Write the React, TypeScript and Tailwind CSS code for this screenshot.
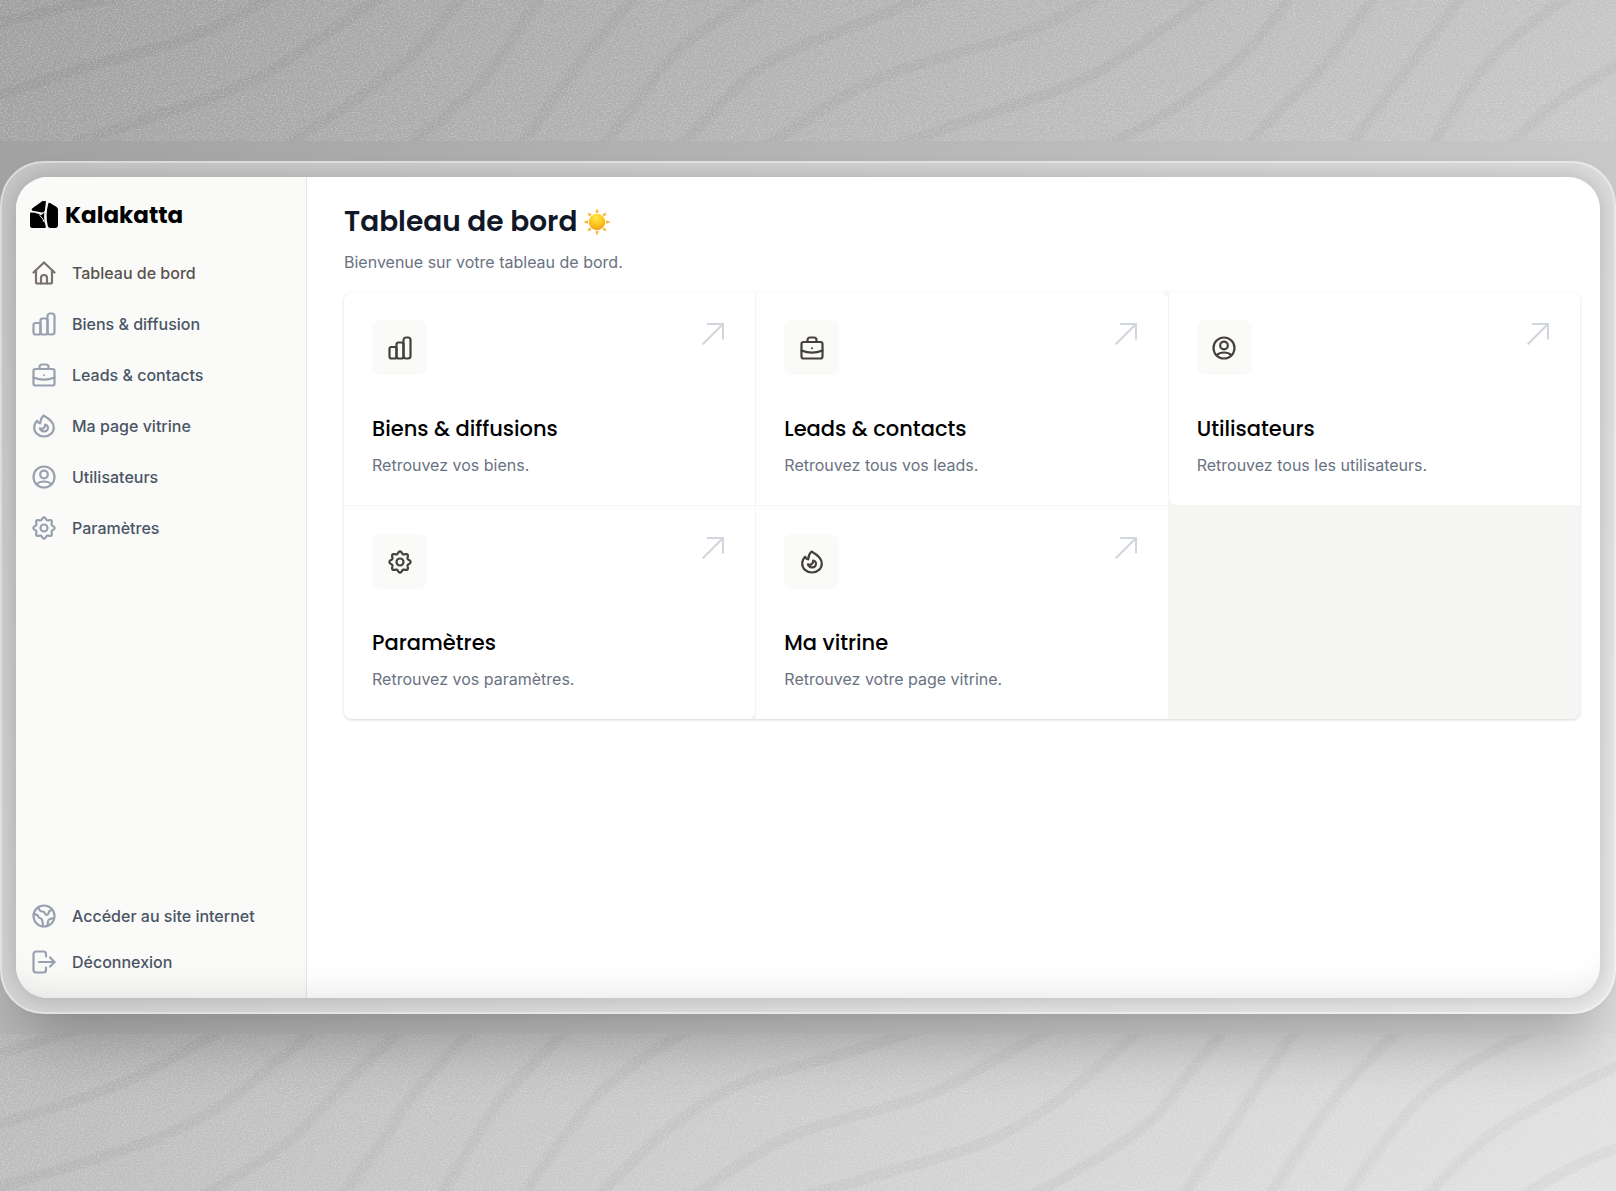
import React from "react";

type Point = [number, number];

const TOP_WAVES: Point[][] = [
  [[-20, 85], [60, 20], [130, -20]],
  [[-20, 310], [60, 220], [160, 140], [220, 70], [270, -20]],
  [[75, 430], [150, 350], [240, 260], [290, 160], [375, -20]],
  [[275, 440], [330, 340], [370, 240], [410, 150], [450, -20]],
  [[400, 430], [450, 310], [490, 160], [525, -20]],
  [[505, 440], [540, 290], [570, 150], [620, -20]],
  [[585, 440], [620, 300], [650, 170], [690, 70], [740, -20]],
  [[660, 440], [700, 310], [740, 190], [800, 110], [910, -20]],
  [[745, 440], [810, 300], [870, 210], [940, 150], [1010, 90], [1070, -20]],
  [[870, 440], [960, 340], [1050, 250], [1110, 130], [1178, -20]],
  [[1075, 440], [1130, 350], [1180, 240], [1220, 130], [1255, -20]],
  [[1210, 440], [1245, 320], [1290, 190], [1335, -20]],
  [[1310, 440], [1350, 270], [1385, 130], [1420, -20]],
  [[1390, 440], [1420, 270], [1470, 100], [1525, -20]],
  [[1465, 440], [1510, 280], [1600, 150]],
];

const BOTTOM_WAVES: Point[][] = [
  [[-20, 80], [30, 30], [80, -20]],
  [[-20, 290], [90, 190], [160, 90], [220, -20]],
  [[-20, 480], [80, 390], [160, 310], [220, 210], [270, 80], [308, -20]],
  [[195, 490], [270, 360], [310, 230], [350, 100], [392, -20]],
  [[330, 490], [370, 340], [400, 170], [460, -20]],
  [[427, 490], [460, 320], [490, 170], [552, -20]],
  [[507, 490], [550, 290], [600, 110], [672, -20]],
  [[580, 490], [630, 330], [680, 210], [730, 130], [800, 80], [900, -20]],
  [[672, 490], [740, 340], [800, 270], [900, 190], [960, 90], [1022, -20]],
  [[780, 490], [880, 400], [960, 330], [1020, 220], [1070, 90], [1108, -20]],
  [[1000, 490], [1070, 370], [1120, 260], [1150, 130], [1190, -20]],
  [[1146, 490], [1190, 310], [1220, 150], [1260, -20]],
  [[1232, 490], [1270, 300], [1310, 130], [1360, -20]],
  [[1306, 490], [1345, 310], [1385, 170], [1430, 80], [1492, -20]],
  [[1385, 490], [1430, 330], [1500, 200], [1600, 50]],
  [[1477, 490], [1530, 380], [1600, 310]],
];

// Smooth line through the midpoints of the given points
const toPath = (points: Point[]) => {
  let d = `M${points[0][0]} ${points[0][1]}`;
  for (let i = 1; i < points.length - 1; i++) {
    const [x, y] = points[i];
    const [nx, ny] = points[i + 1];
    const last = i === points.length - 2;
    d += ` Q${x} ${y} ${last ? nx : (x + nx) / 2} ${last ? ny : (y + ny) / 2}`;
  }
  return d;
};

const Texture = ({ id, waves, height }: { id: string; waves: Point[][]; height: number }) => (
  <svg
    className="block h-full w-full"
    viewBox={`0 0 1568 ${height}`}
    preserveAspectRatio="none"
    aria-hidden="true"
  >
    <filter id={`${id}-soft`}>
      <feGaussianBlur stdDeviation="2" />
    </filter>
    <filter id={id} x="0" y="0" width="100%" height="100%">
      <feTurbulence type="fractalNoise" baseFrequency="0.6 0.25" numOctaves="3" stitchTiles="stitch" />
      <feColorMatrix values="0 0 0 0 1  0 0 0 0 1  0 0 0 0 1  1.6 0 0 0 -0.65" />
    </filter>
    <g fill="none" stroke="#000" strokeOpacity="0.035" strokeWidth="11" filter={`url(#${id}-soft)`}>
      {waves.map((wave, i) => (
        <path key={i} d={toPath(wave)} vectorEffect="non-scaling-stroke" />
      ))}
    </g>
    <rect width="1568" height={height} filter={`url(#${id})`} opacity="0.42" />
  </svg>
);

const COG_PATH =
  Array.from({ length: 96 }, (_, i) => {
    const angle = (i / 96) * Math.PI * 2;
    const radius = 9.4 + 1.2 * Math.cos(angle * 8);
    const x = 12 + radius * Math.cos(angle);
    const y = 12 + radius * Math.sin(angle);
    return `${i === 0 ? "M" : "L"}${x.toFixed(2)} ${y.toFixed(2)}`;
  }).join(" ") + "Z";

const ICONS = {
  home: (
    <>
      <path d="M1.5 11.5 12 1.5l10.5 10" />
      <path d="M4 9.5V21a1.5 1.5 0 0 0 1.5 1.5h13A1.5 1.5 0 0 0 20 21V9.5" />
      <path d="M9 22.5V17a3 3 0 0 1 6 0v5.5" />
    </>
  ),
  bars: (
    <>
      <rect x="1.5" y="11" width="7" height="11.5" rx="2" />
      <rect x="8.5" y="6.5" width="7" height="16" rx="2" />
      <rect x="15.5" y="1.5" width="7" height="21" rx="2.5" />
    </>
  ),
  briefcase: (
    <>
      <rect x="1.5" y="6" width="21" height="16.5" rx="2" />
      <path d="M7.5 6V4A2.5 2.5 0 0 1 10 1.5h4A2.5 2.5 0 0 1 16.500 4v2" />
      <path d="M1.5 14.5C8 17.2 16 17.2 22.5 14.5" />
      <circle cx="12" cy="12.3" r="1" fill="currentColor" stroke="none" />
    </>
  ),
  flame: (
    <>
      <path d="M11.5 1.5C16 4 21.8 8 21.8 13.5c0 5-4.3 9-9.8 9s-9.800-4-9.800-9c0-3 1.100-5 2.900-6.800.7 1.700 1.700 2.600 3.100 2.600C8.400 6.500 9.300 3.500 11.500 1.500Z" />
      <path d="M13.2 10.5c2.8.8 3.5 3.3 2.2 5.3-1.8 2.7-6.6 2-7.5-1.5 2.4 1.3 5.6-.3 5.3-3.8Z" />
    </>
  ),
  user: (
    <>
      <circle cx="12" cy="12" r="10.5" />
      <circle cx="12" cy="9.5" r="3.8" />
      <path d="M4.5 19.2c4-3.600 11-3.600 15 0" />
    </>
  ),
  cog: (
    <>
      <path d={COG_PATH} />
      <circle cx="12" cy="12" r="3.5" />
    </>
  ),
  globe: (
    <>
      <circle cx="12" cy="12" r="10.5" />
      <path d="M6.2 3.2C7 6 8.2 7.5 10.5 7.5c2.6 0 2.2 3.2 4.2 3.5 2.5.3 1.3-3.3 3-4.2l2.3-.8" />
      <path d="M1.8 10.5c2.5-.3 4.2.5 4.8 2.5.6 1.8 3.6.9 3.6 3.3 0 2 1 3 .8 6" />
      <path d="M22.2 14.5c-3.3-.2-6.2.3-6.2 3 0 1.6-.2 2.9-1 4.5" />
    </>
  ),
  logout: (
    <>
      <path d="M14 17.5V20a2.5 2.5 0 0 1-2.5 2.5H4A2.5 2.5 0 0 1 1.5 20V4A2.5 2.5 0 0 1 4 1.5h7.5A2.5 2.5 0 0 1 14 4v2.5" />
      <path d="M7 12h15.5" />
      <path d="m18 7.5 4.5 4.5-4.5 4.5" />
    </>
  ),
};

type IconName = keyof typeof ICONS;

const Icon = ({ name, className }: { name: IconName; className?: string }) => (
  <svg
    className={className}
    viewBox="0 0 24 24"
    fill="none"
    stroke="currentColor"
    strokeWidth="2.2"
    strokeLinecap="round"
    strokeLinejoin="round"
    aria-hidden="true"
  >
    {ICONS[name]}
  </svg>
);

const Logo = () => (
  <svg className="h-7 w-7" viewBox="0 1 28 28" fill="currentColor" aria-hidden="true">
    <path d="M2.4 8.2 12.8.8C14.800-.3 16 .6 15.900 2.300L15 9.800C14.700 11.800 13.500 12.700 11.500 12.500 8.500 12 5.500 11.200 2.500 10.800 1.400 10.500 1.300 9 2.400 8.200Z" />
    <path d="M1.500 12.400C6 12.700 9 13.700 11 15.200L14.300 12.600C14.100 15.500 14 18 14.300 20.500 14.600 22.500 15.200 24.500 15.800 26.500 16 27.400 15.600 28 14.700 28H2.500A2.500 2.500 0 0 1 0 25.500V13.700C0 12.800.6 12.300 1.500 12.400Z" />
    <path d="M9.500 15.400C12 17.300 13 19 14 22" fill="none" stroke="#fafaf9" strokeWidth="1" />
    <path d="M18.200 3.800C18.400 2.800 19.200 2.600 20 3.100L26.300 6.700A3.200 3.200 0 0 1 28 9.500V25A3 3 0 0 1 25 28H20.500C19 28 18.200 27.300 17.800 26 16 19 16.300 11 18.200 3.800Z" />
  </svg>
);

const Sun = () => (
  <svg className="h-7 w-7" viewBox="0 0 28 28" role="img" aria-label="Soleil">
    <defs>
      <radialGradient id="sun" cx="0.45" cy="0.25" r="0.8">
        <stop offset="0" stopColor="#ffe94a" />
        <stop offset="0.5" stopColor="#ffc81e" />
        <stop offset="1" stopColor="#f39a12" />
      </radialGradient>
    </defs>
    {[0, 45, 90, 135, 180, 225, 270, 315].map((angle) => (
      <path
        key={angle}
        d="M14 .5 15.7 4.6Q14 5.4 12.3 4.6Z"
        fill="#f9b22c"
        transform={`rotate(${angle} 14 14)`}
      />
    ))}
    <circle cx="14" cy="14" r="8.2" fill="url(#sun)" />
  </svg>
);

const NAV: { label: string; icon: IconName; active?: boolean }[] = [
  { label: "Tableau de bord", icon: "home", active: true },
  { label: "Biens & diffusion", icon: "bars" },
  { label: "Leads & contacts", icon: "briefcase" },
  { label: "Ma page vitrine", icon: "flame" },
  { label: "Utilisateurs", icon: "user" },
  { label: "Paramètres", icon: "cog" },
];

const FOOTER_NAV: { label: string; icon: IconName }[] = [
  { label: "Accéder au site internet", icon: "globe" },
  { label: "Déconnexion", icon: "logout" },
];

const CARDS: { title: string; text: string; icon: IconName; corner: string }[] = [
  { title: "Biens & diffusions", text: "Retrouvez vos biens.", icon: "bars", corner: "rounded-tl-lg" },
  { title: "Leads & contacts", text: "Retrouvez tous vos leads.", icon: "briefcase", corner: "rounded-tr-lg" },
  { title: "Utilisateurs", text: "Retrouvez tous les utilisateurs.", icon: "user", corner: "rounded-bl-lg" },
  { title: "Paramètres", text: "Retrouvez vos paramètres.", icon: "cog", corner: "rounded-b-lg" },
  { title: "Ma vitrine", text: "Retrouvez votre page vitrine.", icon: "flame", corner: "" },
];

const NavLink = ({ label, icon, active }: { label: string; icon: IconName; active?: boolean }) => (
  <a
    href="#"
    className={`flex items-center gap-4 text-base leading-6 font-medium ${
      active ? "text-stone-600" : "text-gray-600"
    }`}
  >
    <Icon name={icon} className={`h-6 w-6 ${active ? "text-stone-500" : "text-gray-400"}`} />
    {label}
  </a>
);

const Card = ({ title, text, icon, corner }: { title: string; text: string; icon: IconName; corner: string }) => (
  <a href="#" className={`block bg-white p-7 ${corner}`}>
    <div className="flex items-start justify-between">
      <span className="flex h-[55px] w-[55px] items-center justify-center rounded-lg bg-stone-50 text-stone-700">
        <Icon name={icon} className="h-6 w-6" />
      </span>
      <svg
        className="mt-[3px] mr-[3px] h-[22px] w-[22px] text-gray-300"
        viewBox="0 0 22 22"
        fill="none"
        stroke="currentColor"
        strokeWidth="2"
        aria-hidden="true"
      >
        <path d="M.7 21.3 21 1M5 1h16v15.5" />
      </svg>
    </div>
    <h2 className="mt-10 font-[Poppins,Inter,sans-serif] text-[21px] leading-7 font-medium text-black">{title}</h2>
    <p className="mt-2.5 text-base leading-6 text-gray-500">{text}</p>
  </a>
);

const App = () => {
  return (
    <div className="flex min-h-screen flex-col overflow-hidden bg-[linear-gradient(137deg,#9e9e9e_0%,#e2e2e2_100%)] font-[Inter,sans-serif]">
      <div className="h-[141px]">
        <Texture id="grain-top" waves={TOP_WAVES} height={426} />
      </div>

      <div className="relative z-10 flex flex-1 flex-col py-5">
        <div className="flex flex-1 rounded-[44px] border-2 border-white/40 bg-white/40 p-[14px] shadow-[0_50px_60px_-24px_rgba(0,0,0,0.25)]">
          <div className="relative flex flex-1 overflow-hidden rounded-[32px] bg-white shadow-[0_0_24px_rgba(0,0,0,0.2)]">
            <aside className="flex w-[291px] flex-col border-r border-gray-200 bg-stone-50 pt-[22px] pr-4 pb-6 pl-4">
              <a href="#" className="-ml-0.5 flex items-center gap-[7px] text-black">
                <Logo />
                <span className="font-[Poppins,Inter,sans-serif] text-[23px] leading-8 font-bold">Kalakatta</span>
              </a>
              <nav className="mt-[30px] flex flex-col gap-[27px]">
                {NAV.map((item) => (
                  <NavLink key={item.label} {...item} />
                ))}
              </nav>
              <nav className="mt-auto flex flex-col gap-[22px]">
                {FOOTER_NAV.map((item) => (
                  <NavLink key={item.label} {...item} />
                ))}
              </nav>
            </aside>

            <main className="flex-1 pt-[27px] pr-5 pl-[37px]">
              <h1 className="flex items-center gap-1.5 font-[Poppins,Inter,sans-serif] text-[28px] leading-9 font-semibold text-gray-900">
                Tableau de bord
                <Sun />
              </h1>
              <p className="mt-2.5 text-base leading-6 text-gray-500">Bienvenue sur votre tableau de bord.</p>
              <div className="mt-[18px] grid grid-cols-3 gap-px overflow-hidden rounded-lg bg-stone-100 shadow-[0_1px_3px_rgba(0,0,0,0.16)]">
                {CARDS.map((card) => (
                  <Card key={card.title} {...card} />
                ))}
              </div>
            </main>

            <div className="pointer-events-none absolute inset-0 rounded-[32px] shadow-[inset_0_-36px_36px_-36px_rgba(0,0,0,0.12)]" />
          </div>
        </div>
      </div>

      <div className="h-[157px]">
        <Texture id="grain-bottom" waves={BOTTOM_WAVES} height={474} />
      </div>
    </div>
  );
};

export default App;
